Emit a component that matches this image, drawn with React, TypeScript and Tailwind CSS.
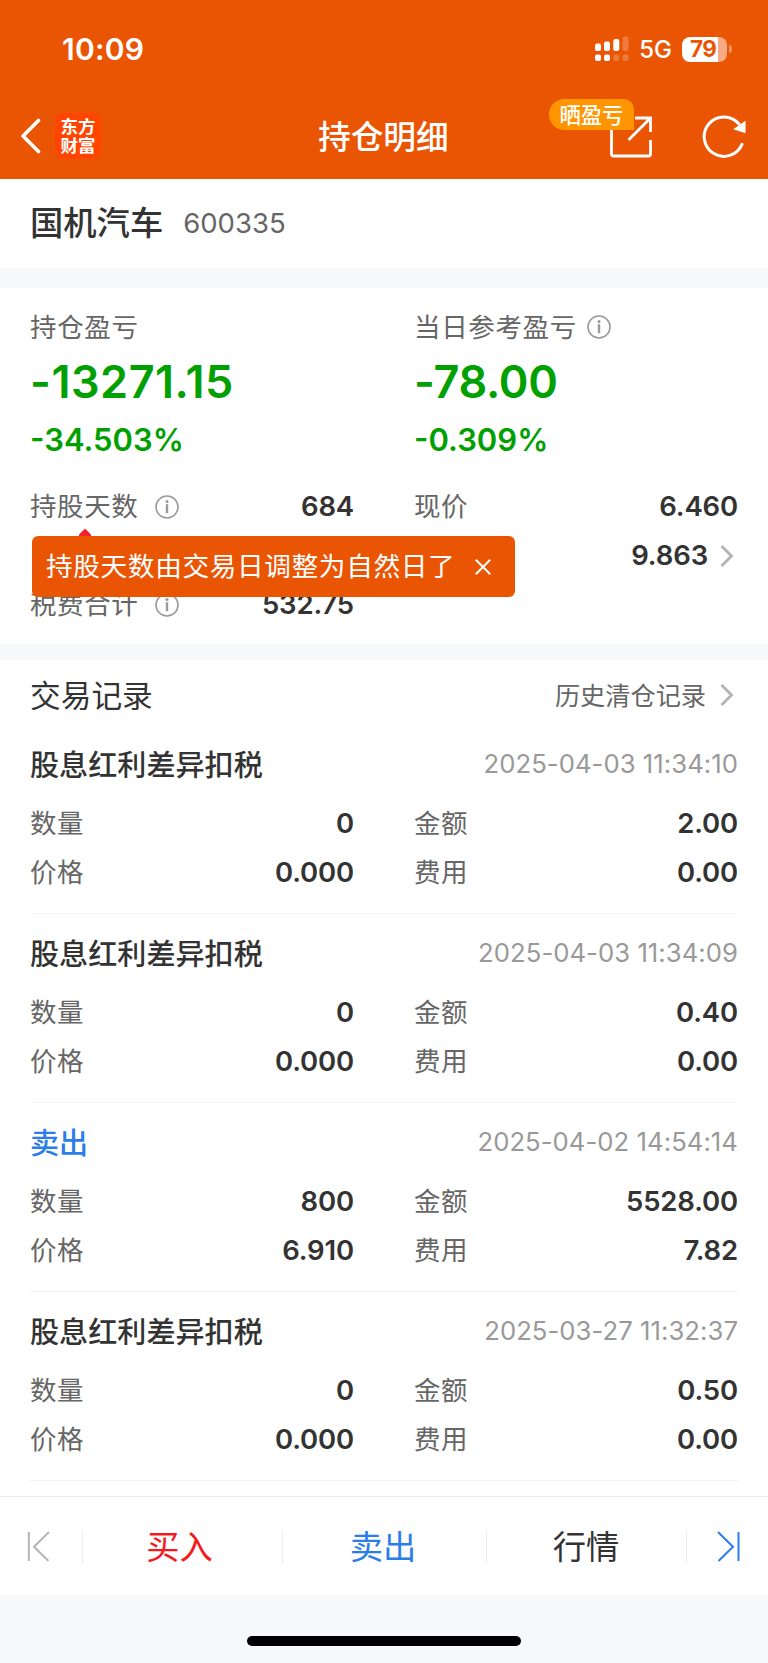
import React from "react";

const CJK = "font-['Noto_Sans_CJK_SC',sans-serif]";

function InfoIcon({ className = "" }: { className?: string }) {
  return (
    <svg className={className} width="24" height="24" viewBox="0 0 24 24" fill="none">
      <circle cx="12" cy="12" r="11" stroke="#999" strokeWidth="1.6" />
      <circle cx="12" cy="6.4" r="1.5" fill="#999" />
      <path d="M12 9.200v9" stroke="#999" strokeWidth="2.400" />
    </svg>
  );
}

function Chevron({ className = "" }: { className?: string }) {
  return (
    <svg className={className} width="14" height="22" viewBox="0 0 14 22" fill="none">
      <path d="M1.500 1 11.500 11 1.500 21" stroke="#b3b3b3" strokeWidth="2.800" />
    </svg>
  );
}

function Pair({ label, value, info, arrow }: { label?: string; value?: string; info?: boolean; arrow?: boolean }) {
  return (
    <div className="flex h-[49px] items-center">
      {label && <span className="whitespace-nowrap pb-[2px] text-[26.500px] leading-none tracking-[0.600px] text-[#666]">{label}</span>}
      {info && <InfoIcon className="ml-[17px]" />}
      {value && (
        <span className="ml-auto font-[Inter,sans-serif] text-[27.500px] font-semibold leading-none tracking-[-0.150px] text-[#333]">
          {value}
        </span>
      )}
      {arrow && <Chevron className="ml-3 mr-1" />}
    </div>
  );
}

function StatusBar() {
  return (
    <div className="flex h-[98px] items-center pl-[62px] pr-[36px]">
      <span className="font-[Inter,sans-serif] text-[30px] font-semibold leading-none tracking-[0.200px]">10:09</span>
      <svg className="ml-auto" width="34" height="26" viewBox="0 0 34 26" fill="#fff">
        <rect x="0" y="7.500" width="6" height="7.500" rx="2" />
        <rect x="9" y="5.500" width="6" height="9.500" rx="2" />
        <rect x="18.300" y="3" width="6" height="12" rx="2" />
        <rect x="27.500" y="0.500" width="6" height="14.500" rx="2" opacity=".22" />
        <rect x="0" y="18.500" width="6" height="6.500" rx="2" />
        <rect x="9" y="18.500" width="6" height="6.500" rx="2" />
        <rect x="18.300" y="18.500" width="6" height="6.500" rx="2" opacity=".22" />
        <rect x="27.500" y="18.500" width="6" height="6.500" rx="2" opacity=".22" />
      </svg>
      <span className="ml-[10px] mt-[2px] font-[Inter,sans-serif] text-[24px] font-medium leading-none">5G</span>
      <div className="ml-[10px] flex items-center gap-[2px]">
        <div className="flex h-[25px] w-[45px] items-center rounded-[8px] bg-gradient-to-r from-white from-[80%] to-[#f6ab84] to-[80%] pl-[8px] pt-px">
          <span className="font-[Inter,sans-serif] text-[22.500px] font-bold leading-none tracking-[-0.600px] text-[#ea5504]">79</span>
        </div>
        <div className="h-[8px] w-[3px] rounded-r-full bg-[#f3935f]" />
      </div>
    </div>
  );
}

function NavBar() {
  return (
    <div className="flex h-[81px] items-center pl-[20px] pr-[21px] pb-[5px]">
      <svg width="22" height="36" viewBox="0 0 22 36" fill="none">
        <path d="M18.500 2.500 3 18l15.500 15.500" stroke="#fff" strokeWidth="3.600" strokeLinecap="round" strokeLinejoin="round" />
      </svg>
      <div className="ml-[13px] flex h-[46px] w-[46px] flex-col items-center justify-center rounded-[9px] bg-[#ff4500] pb-[2px] text-[17.500px] font-bold leading-[19.500px]">
        <span>东方</span>
        <span>财富</span>
      </div>
      <h1 className="ml-[217px] pb-[2px] text-[32.700px] font-medium leading-none">持仓明细</h1>
      <div className="relative ml-auto h-[44px] w-[44px]">
        <svg width="44" height="44" viewBox="0 0 44 44" fill="none" stroke="#fff" strokeWidth="2.800">
          <path d="M2.500 14v26a2 2 0 0 0 2 2h35a2 2 0 0 0 2-2V26" />
          <path d="M26 4h15.500V18M41 4.500 19.500 26" />
        </svg>
        <div className="absolute -left-[60px] -top-[15px] flex h-[31px] w-[85px] items-center rounded-l-[15.500px] rounded-tr-[10px] bg-[#ff9500] pb-[2px] pl-[10.500px] text-[21.300px] font-medium leading-none">
          晒盈亏
        </div>
      </div>
      <svg className="ml-[48px]" width="46" height="46" viewBox="0 0 46 46" fill="none">
        <path d="M38 11A19.700 19.700 0 1 0 41 31.300" stroke="#fff" strokeWidth="3" strokeLinecap="round" />
        <path d="M44.500 7.700V20.200L32.300 16.200Z" fill="#fff" />
      </svg>
    </div>
  );
}

type MetricProps = { label: string; amount: string; percent: string; info?: boolean; spacing: string };

function Metric({ label, amount, percent, info, spacing }: MetricProps) {
  return (
    <div className="flex flex-col">
      <div className="flex h-[50px] items-center">
        <span className="pb-[2px] text-[26.500px] leading-none tracking-[0.650px] text-[#666]">{label}</span>
        {info && <InfoIcon className="ml-[10px]" />}
      </div>
      <div className={`flex h-[60px] items-center pb-px font-[Inter,sans-serif] text-[45px] font-semibold leading-none text-[#00a000] ${spacing}`}>
        {amount}
      </div>
      <div className="flex h-[56px] items-center pb-px font-[Inter,sans-serif] text-[31px] font-semibold leading-none text-[#00a000]">
        {percent}
      </div>
    </div>
  );
}

type Trade = { kind: string; sell?: boolean; time: string; qty: string; amount: string; price: string; fee: string };

const trades: Trade[] = [
  { kind: "股息红利差异扣税", time: "2025-04-03 11:34:10", qty: "0", amount: "2.00", price: "0.000", fee: "0.00" },
  { kind: "股息红利差异扣税", time: "2025-04-03 11:34:09", qty: "0", amount: "0.40", price: "0.000", fee: "0.00" },
  { kind: "卖出", sell: true, time: "2025-04-02 14:54:14", qty: "800", amount: "5528.00", price: "6.910", fee: "7.82" },
  { kind: "股息红利差异扣税", time: "2025-03-27 11:32:37", qty: "0", amount: "0.50", price: "0.000", fee: "0.00" },
];

function TradeItem({ t }: { t: Trade }) {
  return (
    <li className="mx-[30px] h-[189px] border-b border-[#f2f2f2] pt-[14px]">
      <div className="flex h-[50px] items-center justify-between">
        <span className={`pb-px text-[29.100px] font-medium leading-none ${t.sell ? "text-[#2b7de9]" : "text-[#333]"}`}>{t.kind}</span>
        <span className="font-[Inter,sans-serif] text-[25.700px] leading-none tracking-[0.040px] text-[#999]">{t.time}</span>
      </div>
      <div className="mt-[10px] grid grid-cols-[324px_324px] gap-x-[60px]">
        <Pair label="数量" value={t.qty} />
        <Pair label="金额" value={t.amount} />
        <Pair label="价格" value={t.price} />
        <Pair label="费用" value={t.fee} />
      </div>
    </li>
  );
}

function Tooltip() {
  return (
    <div className="absolute left-[32px] top-[240px] flex w-[483px] flex-col">
      <svg className="ml-[47px]" width="12" height="8" viewBox="0 0 12 8">
        <path d="M0 8V6.500L6 0.500 12 6.500V8Z" fill="#f5222d" />
      </svg>
      <div className="flex h-[61px] items-center rounded-[6px] bg-[#ea5504] pl-[14px] text-white">
        <span className="whitespace-nowrap pb-[2px] text-[26.700px] leading-none tracking-[0.600px]">持股天数由交易日调整为自然日了</span>
        <svg className="ml-[20px]" width="16" height="16" viewBox="0 0 16 16" fill="none">
          <path d="M0.800 0.800 15.200 15.200M15.200 0.800 0.800 15.200" stroke="#fff" strokeWidth="2" />
        </svg>
      </div>
    </div>
  );
}

function Separator() {
  return <div className="h-[33px] w-px shrink-0 bg-[#ececec]" />;
}

export default function App() {
  return (
    <div className={`flex h-[1663px] w-[768px] flex-col overflow-hidden bg-[#f7f8fa] ${CJK}`}>
      <header className="h-[179px] shrink-0 bg-[#ea5504] text-white">
        <StatusBar />
        <NavBar />
      </header>

      <section className="flex h-[89px] shrink-0 items-center bg-white pl-[30px]">
        <span className="pb-[5px] text-[33.300px] font-medium leading-none text-[#333]">国机汽车</span>
        <span className="ml-[20px] font-[Inter,sans-serif] text-[27.500px] leading-none text-[#666]">600335</span>
      </section>

      <section className="relative mt-[20px] h-[356px] shrink-0 bg-white px-[30px] pt-[14px]">
        <div className="grid grid-cols-[324px_324px] gap-x-[60px]">
          <Metric label="持仓盈亏" amount="-13271.15" percent="-34.503%" spacing="tracking-[0.500px]" />
          <Metric label="当日参考盈亏" amount="-78.00" percent="-0.309%" spacing="tracking-[-0.300px]" info />
        </div>
        <div className="mt-[14px] grid grid-cols-[324px_324px] gap-x-[60px]">
          <Pair label="持股天数" value="684" info />
          <Pair label="现价" value="6.460" />
          <Pair />
          <Pair value="9.863" arrow />
          <Pair label="税费合计" value="532.75" info />
        </div>
        <Tooltip />
      </section>

      <section className="mt-[16px] h-[836px] shrink-0 bg-white">
        <div className="flex h-[65px] items-center justify-between px-[30px] pt-[6px]">
          <h2 className="pb-[2px] text-[30.700px] leading-none text-[#333]">交易记录</h2>
          <div className="flex items-center">
            <span className="pb-[2px] text-[25.200px] leading-none text-[#666]">历史清仓记录</span>
            <Chevron className="ml-[14px] mr-1" />
          </div>
        </div>
        <ul>
          {trades.map((t) => (
            <TradeItem key={t.time} t={t} />
          ))}
        </ul>
      </section>

      <nav className="flex h-[99px] shrink-0 items-center border-t border-[#ececec] bg-white text-[33.300px] leading-none">
        <div className="flex w-[82px] justify-start pl-[27px]">
          <svg width="24" height="31" viewBox="0 0 24 31" fill="none" stroke="#b5b5b5" strokeWidth="2">
            <path d="M1.800 1v29M22 1 7 15.800 21.500 30" />
          </svg>
        </div>
        <Separator />
        <span className="w-[199px] pb-[3px] pr-[6px] text-center text-[#f5191d]">买入</span>
        <Separator />
        <span className="w-[203px] pb-[3px] pr-[3px] text-center text-[#2b7de9]">卖出</span>
        <Separator />
        <span className="w-[199px] pb-[3px] pr-px text-center text-[#333]">行情</span>
        <Separator />
        <div className="flex w-[81px] justify-end pr-[28px]">
          <svg width="24" height="31" viewBox="0 0 24 31" fill="none" stroke="#2b7de9" strokeWidth="2">
            <path d="M22.500 1v29M2 1 17 15.800 2.500 30" />
          </svg>
        </div>
      </nav>

      <footer className="flex h-[68px] shrink-0 items-end justify-center pb-[17px]">
        <div className="h-[10px] w-[274px] rounded-full bg-black" />
      </footer>
    </div>
  );
}
